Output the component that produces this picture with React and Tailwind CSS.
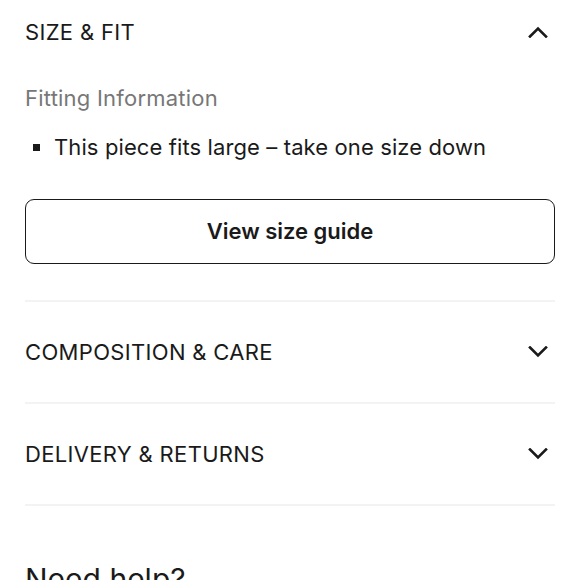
import React from 'react';

const Chevron = ({ up }) => (
  <svg width="20" height="12" viewBox="0 0 20 12" fill="none" className="shrink-0">
    <path
      d={up ? 'M2 10.5 L10 2.5 L18 10.5' : 'M2 1.5 L10 9.5 L18 1.5'}
      stroke="#1a1a1a"
      strokeWidth="2.6"
      strokeLinecap="square"
    />
  </svg>
);

const Section = ({ title }) => (
  <div className="flex items-center justify-between h-[102px] border-b-2 border-[#f3f3f3]">
    <span className="text-[22px] tracking-[0.015em] text-[#1a1a1a]">{title}</span>
    <div className="pr-[7px]"><Chevron /></div>
  </div>
);

export default function App() {
  return (
    <div className="w-[580px] h-[580px] overflow-hidden bg-white px-[25px] font-['Inter',sans-serif]">
      <div className="border-b-2 border-[#f3f3f3] pb-[36px]">
        <div className="flex items-center justify-between h-[64px]">
          <span className="text-[22px] tracking-[0.015em] text-[#1a1a1a]">SIZE &amp; FIT</span>
          <div className="pr-[7px]"><Chevron up /></div>
        </div>
        <p className="text-[22px] tracking-[0.01em] text-[#777777] mt-[21px] leading-[26px]">Fitting Information</p>
        <ul className="mt-[23px]">
          <li className="flex items-center text-[22px] tracking-[0.005em] text-[#1a1a1a] leading-[26px]">
            <span className="w-[7px] h-[7px] bg-[#1a1a1a] ml-[8px] mr-[14px]" />
            This piece fits large – take one size down
          </li>
        </ul>
        <button className="mt-[39px] w-full h-[65px] rounded-[9px] border-[1.5px] border-[#1a1a1a] text-[22px] font-semibold text-[#1a1a1a]">
          View size guide
        </button>
      </div>
      <Section title="COMPOSITION & CARE" />
      <Section title="DELIVERY & RETURNS" />
      <h2 className="mt-[58px] text-[30px] text-[#1a1a1a] leading-none">Need help?</h2>
    </div>
  );
}
